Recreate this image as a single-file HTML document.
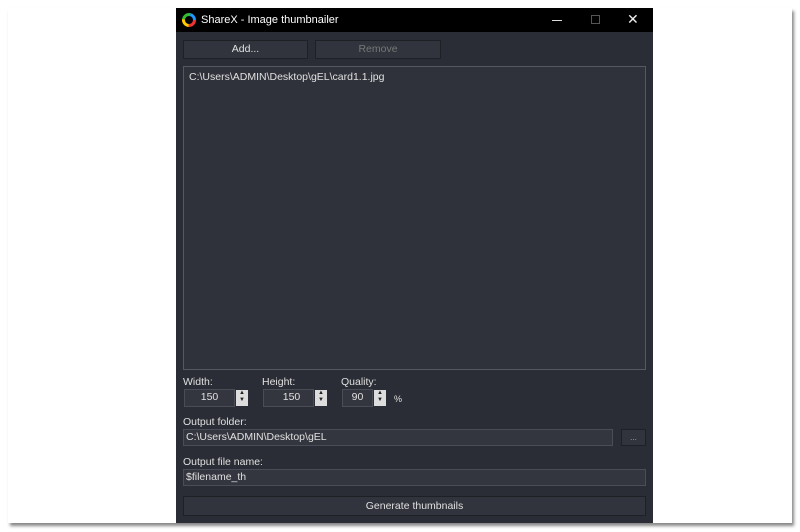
<!DOCTYPE html>
<html><head><style>
*{margin:0;padding:0;box-sizing:border-box}
body{width:800px;height:532px;background:#fff;position:relative;overflow:hidden;font-family:"Liberation Sans",sans-serif;font-size:10.5px;color:#e0e0e0}
.frame{position:absolute;left:8px;top:8px;width:784px;height:515px;background:#fff;box-shadow:2px 3px 3px #888}
.win{position:absolute;left:176px;top:8px;width:477px;height:515px;background:#2a2d35}
.title{position:absolute;left:0;top:0;width:477px;height:24px;background:#000;color:#fff;font-size:11px}
.abs{position:absolute}
.btn{position:absolute;background:#31343c;border:1px solid #1e2026;text-align:center;line-height:17px}
.box{position:absolute;background:#33363e;border:1px solid #4a4d55}
.spin{position:absolute;width:12px;height:16px;background:#ddd;top:0px;right:-14px;color:#222;font-size:6px;line-height:7px;text-align:center}
</style></head><body>
<div class="frame"></div>
<div class="win">
 <div class="title">
  <svg class="abs" style="left:6px;top:5px" width="14" height="14" viewBox="0 0 14 14"><circle cx="7" cy="7" r="5.5" fill="none" stroke="#e33" stroke-width="3" stroke-dasharray="9 28"/><circle cx="7" cy="7" r="5.5" fill="none" stroke="#fc0" stroke-width="3" stroke-dasharray="9 28" stroke-dashoffset="-9"/><circle cx="7" cy="7" r="5.5" fill="none" stroke="#3b3" stroke-width="3" stroke-dasharray="9 28" stroke-dashoffset="-18"/><circle cx="7" cy="7" r="5.5" fill="none" stroke="#29f" stroke-width="3" stroke-dasharray="10 28" stroke-dashoffset="-27"/></svg>
  <div class="abs" style="left:25px;top:6px">ShareX - Image thumbnailer</div>
  <div class="abs" style="left:376px;top:12px;width:10px;height:1px;background:#ddd"></div>
  <div class="abs" style="left:415px;top:7px;width:9px;height:9px;border:1px solid #555"></div>
  <div class="abs" style="left:451px;top:3px;font-size:14px;color:#eee">✕</div>
 </div>
 <div class="btn" style="left:7px;top:32px;width:125px;height:19px">Add...</div>
 <div class="btn" style="left:139px;top:32px;width:126px;height:19px;color:#777">Remove</div>
 <div class="box" style="left:7px;top:58px;width:463px;height:304px;background:#2f323a;border-color:#55585f"><div class="abs" style="left:5px;top:4px">C:\Users\ADMIN\Desktop\gEL\card1.1.jpg</div></div>
 <div class="abs" style="left:7px;top:368px">Width:</div>
 <div class="abs" style="left:86px;top:368px">Height:</div>
 <div class="abs" style="left:165px;top:368px">Quality:</div>
 <div class="box" style="left:8px;top:381px;width:51px;height:18px;text-align:center;line-height:15px">150<div class="spin">▲<br>▼</div></div>
 <div class="box" style="left:87px;top:381px;width:51px;height:18px;text-align:center;line-height:15px;padding-left:6px">150<div class="spin">▲<br>▼</div></div>
 <div class="box" style="left:166px;top:381px;width:31px;height:18px;text-align:center;line-height:15px">90<div class="spin">▲<br>▼</div></div>
 <div class="abs" style="left:218px;top:386px;font-size:9px">%</div>
 <div class="abs" style="left:7px;top:408px">Output folder:</div>
 <div class="box" style="left:7px;top:421px;width:430px;height:17px;padding-left:2px;line-height:14px">C:\Users\ADMIN\Desktop\gEL</div>
 <div class="btn" style="left:445px;top:421px;width:25px;height:17px;font-size:8px;color:#aaa;line-height:15px">...</div>
 <div class="abs" style="left:7px;top:448px">Output file name:</div>
 <div class="box" style="left:7px;top:461px;width:463px;height:17px;padding-left:2px;line-height:14px">$filename_th</div>
 <div class="btn" style="left:7px;top:488px;width:463px;height:20px;line-height:18px">Generate thumbnails</div>
</div>
</body></html>
